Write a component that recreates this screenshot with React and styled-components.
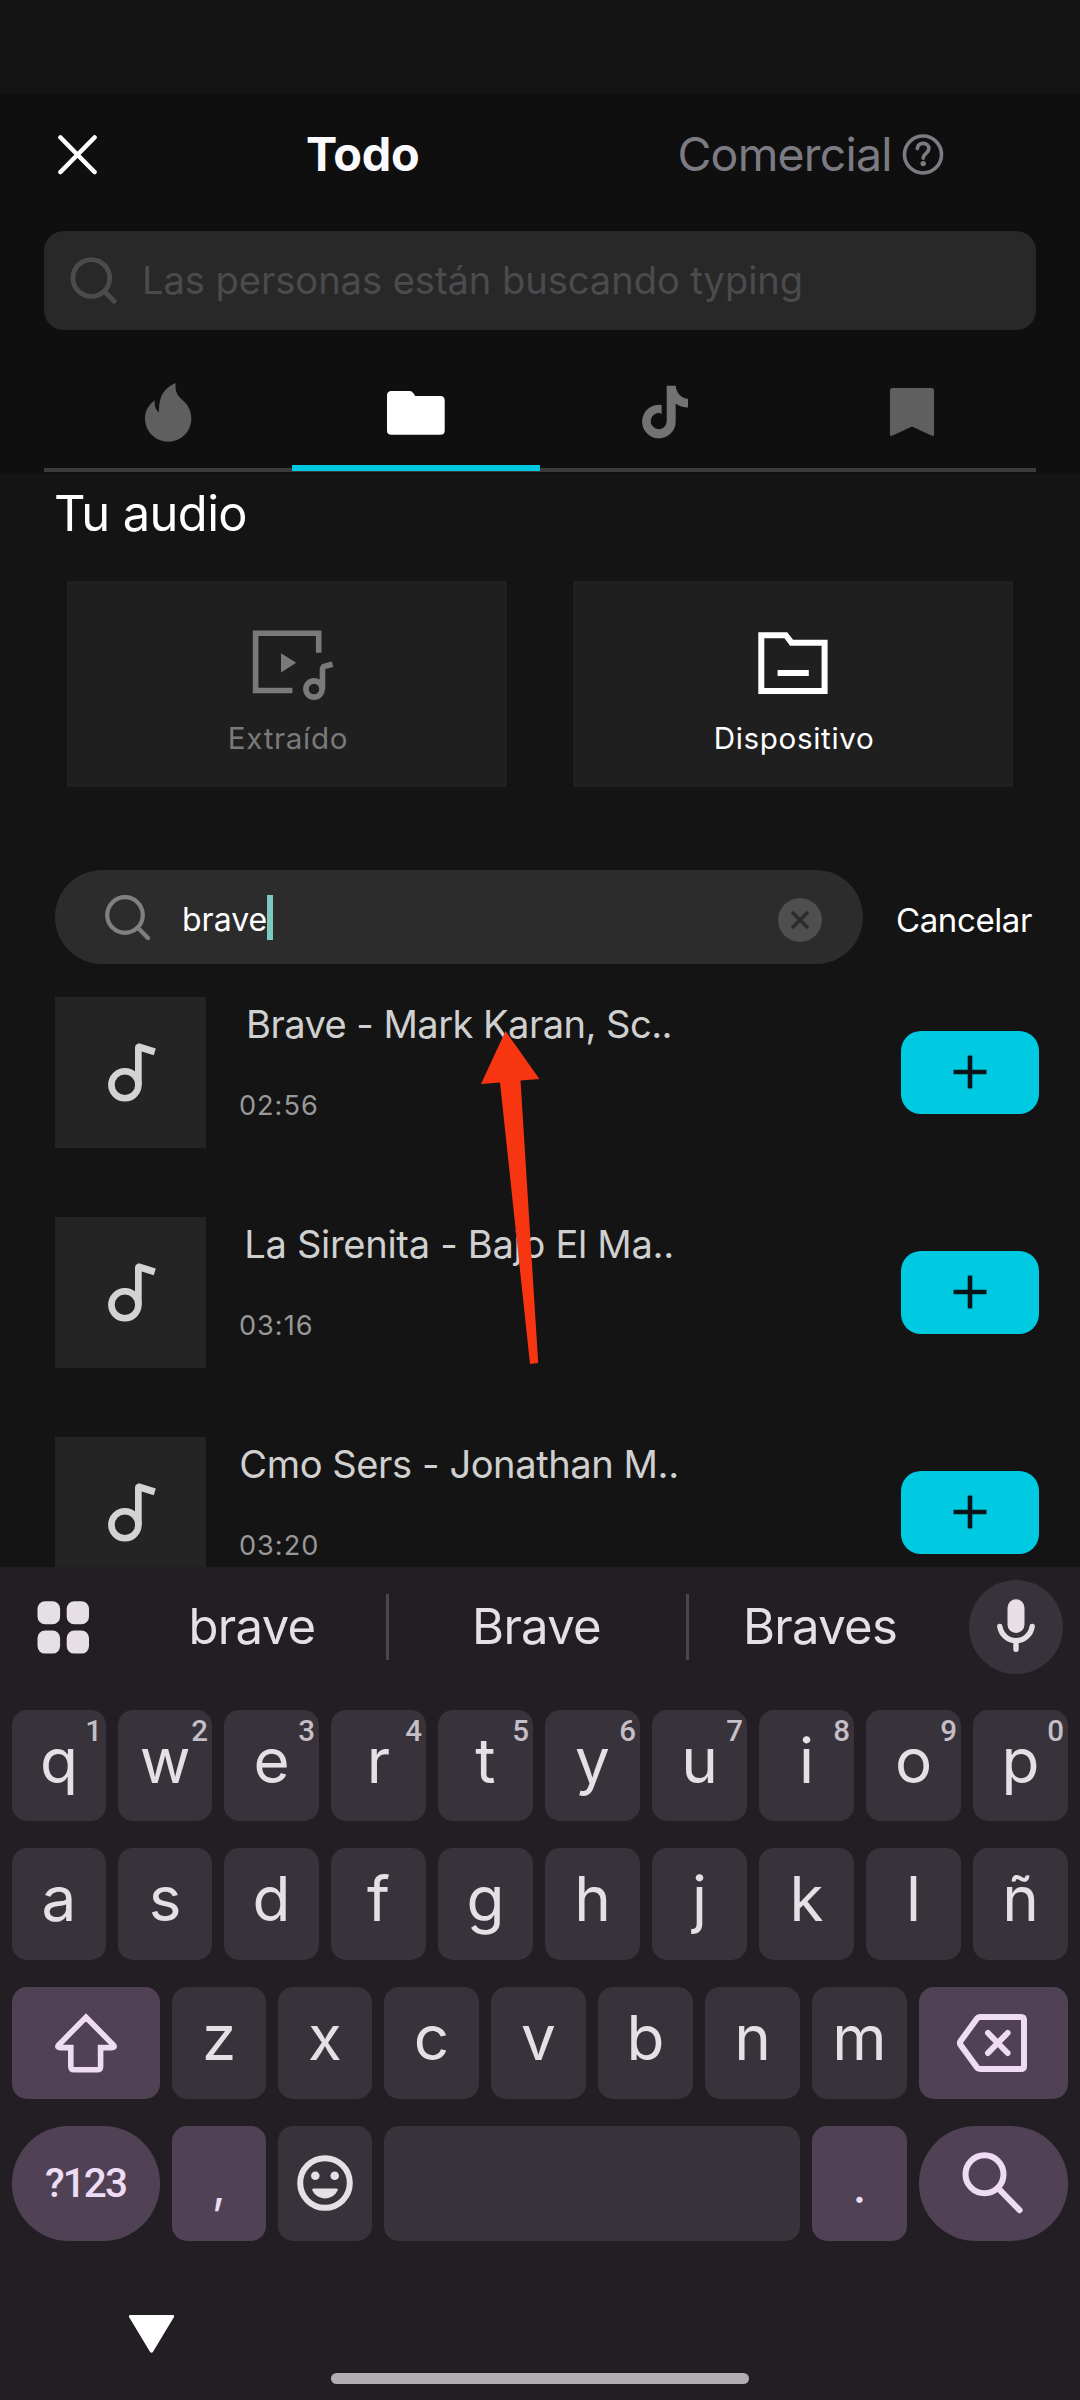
import React from "react";
import styled, { createGlobalStyle } from "styled-components";

const GlobalStyle = createGlobalStyle`
  * { box-sizing: border-box; }
  body { margin: 0; background: #141414; }
`;

const Screen = styled.div`
  display: flex;
  flex-direction: column;
  width: 1080px;
  height: 2400px;
  overflow: hidden;
  background: #141414;
  font-family: Inter, Roboto, sans-serif;
  color: #fff;
`;

const StatusBar = styled.div`
  flex: none;
  height: 94px;
`;

/* ---------- sound library ---------- */

const Library = styled.main`
  flex: none;
  height: 1473px;
  overflow: hidden;
`;

const Header = styled.header`
  height: 379px;
  padding: 0 44px;
  background: #0f0f0f;
`;

const TitleBar = styled.div`
  display: flex;
  align-items: center;
  height: 120px;
  padding-left: 13px;
`;

const TitleTab = styled.div`
  display: flex;
  align-items: center;
  gap: 10px;
  margin-left: ${(p) => p.$offset}px;
  font-size: ${(p) => (p.$active ? 46.8 : 46.4)}px;
  font-weight: ${(p) => (p.$active ? 700 : 400)};
  letter-spacing: ${(p) => (p.$active ? -0.25 : -0.75)}px;
  line-height: 60px;
  color: ${(p) => (p.$active ? "#fafaff" : "#7c7b83")};
`;

const SearchField = styled.div`
  display: flex;
  align-items: center;
  height: 99px;
  margin-top: 17px;
  padding: 0 0 1px 26px;
  border-radius: 20px;
  background: #282828;
`;

const Placeholder = styled.span`
  margin-left: 24px;
  font-size: 38.1px;
  letter-spacing: -0.04px;
  line-height: 50px;
  color: #4b4b4e;
`;

const Tabs = styled.nav`
  display: grid;
  grid-template-columns: repeat(4, 1fr);
  height: 142px;
  border-bottom: 4px solid #3b3b3b;
`;

const Tab = styled.div`
  display: flex;
  align-items: center;
  justify-content: center;
  height: 141px;
  padding-top: 29px;
  border-bottom: 6px solid ${(p) => (p.$active ? "#00c8de" : "transparent")};
  svg { flex: none; }
`;

const SectionTitle = styled.h1`
  margin: 0;
  height: 108px;
  padding: 11px 0 0 54px;
  font-size: 48.8px;
  font-weight: 400;
  letter-spacing: -0.58px;
  line-height: 60px;
`;

const Sources = styled.div`
  display: flex;
  gap: 66px;
  padding-left: 67px;
`;

const SourceCard = styled.div`
  display: flex;
  flex-direction: column;
  align-items: center;
  width: 440px;
  height: 206px;
  padding-top: 47px;
  background: #1f1f1f;
  color: ${(p) => (p.$muted ? "#7a7a7a" : "#fff")};
`;

const SourceLabel = styled.div`
  margin-top: 18px;
  padding-left: 2px;
  font-size: 29.6px;
  letter-spacing: 0.66px;
  line-height: 37px;
`;

const QueryRow = styled.div`
  display: flex;
  align-items: center;
  margin: 83px 0 33px 55px;
`;

const QueryField = styled.div`
  display: flex;
  align-items: center;
  width: 808px;
  height: 94px;
  padding: 0 41px 0 49px;
  border-radius: 47px;
  background: #2c2c2c;
`;

const Query = styled.span`
  margin: 5px 0 0 30px;
  font-size: 32px;
  line-height: 44px;
`;

const Caret = styled.span`
  width: 6px;
  height: 45px;
  margin-right: auto;
  background: #7cc9c1;
`;

const ClearButton = styled.span`
  display: grid;
  place-items: center;
  width: 44px;
  height: 44px;
  margin-top: 6px;
  border-radius: 50%;
  background: #4f4f4f;
`;

const Cancel = styled.span`
  margin: 6px 0 0 33px;
  font-size: 33px;
  letter-spacing: -0.4px;
  line-height: 44px;
`;

const TrackList = styled.div`
  position: relative;
  display: flex;
  flex-direction: column;
  gap: 69px;
`;

const Track = styled.div`
  display: flex;
  align-items: center;
  height: 151px;
  padding-left: 55px;
`;

const Cover = styled.div`
  display: grid;
  place-items: center;
  width: 151px;
  height: 151px;
  padding-right: 2px;
  background: #242424;
`;

const TrackInfo = styled.div`
  align-self: stretch;
  width: 441px;
  margin: 0 221px 0 33px;
`;

const TrackTitle = styled.div`
  padding: 3px 1px 0 0;
  text-align: center;
  white-space: nowrap;
  font-size: 38.1px;
  letter-spacing: ${(p) => p.$tracking}px;
  line-height: 49px;
  color: #d0d0d0;
`;

const TrackTime = styled.div`
  margin-top: 38px;
  font-size: 27.1px;
  letter-spacing: 1px;
  line-height: 37px;
  color: #989898;
`;

const AddButton = styled.div`
  display: grid;
  place-items: center;
  width: 138px;
  height: 83px;
  padding: 0 1px 1px 0;
  border-radius: 20px;
  background: #00cae2;
`;

const PointerArrow = styled.svg`
  position: absolute;
  left: 480px;
  top: 34px;
`;

/* ---------- keyboard ---------- */

const Keyboard = styled.section`
  flex: 1;
  background: #231e24;
  color: #e7dfe6;
`;

const Suggestions = styled.div`
  display: flex;
  align-items: center;
  height: 120px;
  margin-bottom: 23px;
  padding-left: 37px;
`;

const Word = styled.div`
  width: ${(p) => p.$width}px;
  margin-left: ${(p) => p.$gap || 0}px;
  padding-right: 2px;
  text-align: center;
  font-size: 49px;
  letter-spacing: -0.7px;
  line-height: 60px;
`;

const Divider = styled.i`
  width: 3px;
  height: 66px;
  background: #4a464c;
`;

const MicButton = styled.div`
  display: grid;
  place-items: center;
  width: 94px;
  height: 94px;
  margin-left: 16px;
  border-radius: 50%;
  background: #38333a;
`;

const KeyRows = styled.div`
  display: flex;
  flex-direction: column;
  gap: 27px;
  padding: 0 12px;
`;

const KeyRow = styled.div`
  display: grid;
  grid-template-columns: ${(p) => p.$columns || "94px 94px repeat(8, 95px)"};
  grid-template-rows: 100%;
  gap: 12px;
  height: ${(p) => p.$height}px;
`;

const Key = styled.div`
  position: relative;
  min-width: 0;
  border-radius: 15px;
  background: #38333a;
  text-align: center;
  font-size: 62px;
  line-height: 101px;
`;

const Hint = styled.span`
  position: absolute;
  top: 3px;
  right: 4px;
  font: 500 29.5px/36px Roboto, sans-serif;
  color: #c6bec6;
`;

const IconKey = styled(Key)`
  display: grid;
  place-items: center;
  padding-bottom: 1px;
`;

const FunctionKey = styled(IconKey)`
  padding-right: 1px;
  border-radius: ${(p) => (p.$round ? 57 : 15)}px;
  background: #504254;
  color: #eedcf4;
  font: 500 40.5px/50px Roboto, sans-serif;
  letter-spacing: -1.9px;
`;

const PunctuationKey = styled(Key)`
  background: #504254;
  color: #eedcf4;
  font-size: 48px;
  line-height: 120px;
`;

const NavBar = styled.footer`
  display: flex;
  flex-direction: column;
  padding-top: 74px;
`;

const HideKeyboard = styled.svg`
  margin-left: 128px;
`;

const HomeBar = styled.div`
  width: 418px;
  height: 11px;
  margin: 20px 0 0 331px;
  border-radius: 6px;
  background: #b1aeb1;
`;

/* ---------- icons ---------- */

const CloseIcon = () => (
  <svg width="41" height="41" fill="none" stroke="#fff" strokeWidth="4.6" strokeLinecap="round">
    <path d="M3.5 3.5 37.5 38M37.5 3.5 3.5 38" />
  </svg>
);

const HelpIcon = () => (
  <svg width="42" height="42" fill="none" stroke="currentColor" strokeLinecap="round">
    <circle cx="21" cy="21.5" r="18.5" strokeWidth="3.6" />
    <path d="M15.3 15.4C15.8 12 18 10.4 21.2 10.4 24.6 10.4 26.9 12.4 26.9 15.6 26.9 20.4 21.2 20.2 21.2 25.2" strokeWidth="3.6" />
    <circle cx="21.2" cy="30.6" r="2.7" fill="currentColor" stroke="none" />
  </svg>
);

const SearchIcon = () => (
  <svg width="48" height="48" fill="none" stroke="#4b4b4e" strokeWidth="4.8">
    <circle cx="21.3" cy="22" r="18.4" />
    <path d="M34.5 35.5 45.6 46.6" />
  </svg>
);

const FlameIcon = () => (
  <svg width="48" height="60" viewBox="194 66 144 180" fill="#5f5f5f">
    <path d="M289 69C287 90 291 103 306 117C325 132 336 152 336 176A69.5 69.5 0 0 1 197 176C197 153 208 134 227 121C224 136 228 149 239 157C239 118 246 88 289 69Z" />
  </svg>
);

const FolderIcon = () => (
  <svg width="58" height="46" viewBox="0 -2 58 46" fill="#fff">
    <path d="M4.5 0H22.5Q25 0 26.4 2.2L28.2 5H53.5Q57.7 5 57.7 9.5V39.5Q57.7 43.8 53.5 43.8H4.5Q0 43.8 0 39.5V4.5Q0 0 4.5 0Z" />
  </svg>
);

const TikTokIcon = () => (
  <svg width="50" height="56" viewBox="-1 0 50 56" fill="#737373">
    <path d="M26.7 1.7H35.7C36.2 8.5 41 14.2 48 14.8V23.5C43.3 23.5 39 22 35.7 19.4V37.3A16.8 16.8 0 1 1 21.6 21V29.7A8 8 0 1 0 26.7 37.3Z" />
  </svg>
);

const BookmarkIcon = () => (
  <svg width="44" height="49" fill="#5f5f5f">
    <path d="M2.5 0H41.5Q44 0 44 2.5V46.3Q44 49 41.3 47.6L22 38.6 2.7 47.6Q0 49 0 46.3V2.5Q0 0 2.5 0Z" />
  </svg>
);

const ExtractIcon = () => (
  <svg width="94" height="74" fill="none" stroke="currentColor" strokeWidth="5.6">
    <path d="M52.4 62.5H15.6V5.2H78.7V24.7" />
    <path d="M41 25.3 56.2 34.8 41 44.4Z" fill="currentColor" stroke="none" />
    <circle cx="74" cy="61" r="8.1" />
    <path d="M82.5 61V41.5Q82.5 38.6 85.5 38L92.6 36.2" />
  </svg>
);

const DeviceIcon = () => (
  <svg width="94" height="74" fill="none" stroke="currentColor" strokeWidth="6">
    <path d="M15.3 7.2H39.8L45.6 14.8H78.6V63H15.3ZM31.6 45H62.8" />
  </svg>
);

const QuerySearchIcon = () => (
  <svg width="48" height="48" fill="none" stroke="#808080" strokeWidth="4.2">
    <circle cx="21" cy="22" r="17.8" />
    <path d="M33.8 34.8 44 45" strokeLinecap="round" />
  </svg>
);

const ClearIcon = () => (
  <svg width="20" height="20" stroke="#2c2c2c" strokeWidth="3.6">
    <path d="M2 2 18 18M18 2 2 18" />
  </svg>
);

const NoteIcon = () => (
  <svg width="54" height="60">
    <circle cx="21.9" cy="41.8" r="13.5" fill="none" stroke="#d3d3d3" strokeWidth="6.6" />
    <path d="M32 42V4.5Q32 2 34.2 1.1L36 .2 52.8 5.5 50.8 12.2 38.7 8.6V42Z" fill="#d3d3d3" />
  </svg>
);

const PlusIcon = () => (
  <svg width="34" height="34" stroke="#081418" strokeWidth="4.6">
    <path d="M.5 17H33.5M17 .5V33.5" />
  </svg>
);

const GridIcon = () => (
  <svg width="52" height="53" fill="currentColor">
    <rect x=".5" y=".3" width="22.6" height="23" rx="7.5" />
    <rect x="29.7" y=".3" width="22.3" height="23" rx="7.5" />
    <rect x=".5" y="29.6" width="22.6" height="23" rx="7.5" />
    <rect x="29.7" y="29.6" width="22.3" height="23" rx="7.5" />
  </svg>
);

const MicIcon = () => (
  <svg width="64" height="64" fill="none" stroke="currentColor" strokeWidth="5.4" strokeLinecap="round">
    <rect x="23.5" y="4.3" width="17" height="33.6" rx="8.5" fill="currentColor" stroke="none" />
    <path d="M15.8 31.5C17.3 40 24 45.7 32 45.7S46.7 40 48.2 31.5M32 45.7V54.2" />
  </svg>
);

const ShiftIcon = () => (
  <svg width="68" height="66" fill="none" stroke="currentColor" strokeWidth="5.6">
    <path d="M34 7.2 6.6 35Q4.6 37.6 8 37.6H18.8V56.5Q18.8 59.8 22 59.8H45.4Q48.6 59.8 48.6 56.5V37.6H60Q63.4 37.6 61.4 35Z" />
  </svg>
);

const BackspaceIcon = () => (
  <svg width="74" height="64" fill="none" stroke="currentColor" strokeWidth="6">
    <path d="M24 6H65Q68 6 68 9V55Q68 58 65 58H24Q22 58 21 56.5L4.3 33.5Q3.4 32 4.3 30.5L21 7.5Q22 6 24 6Z" />
    <path d="M32 22 51.6 42M51.6 22 32 42" strokeLinecap="round" />
  </svg>
);

const EmojiIcon = () => (
  <svg width="58" height="58" fill="currentColor">
    <circle cx="29" cy="29" r="24.8" fill="none" stroke="currentColor" strokeWidth="6" />
    <circle cx="19.3" cy="21.8" r="4.3" />
    <circle cx="38.7" cy="21.8" r="4.3" />
    <path d="M17.5 34.6H40.5Q42.3 34.6 41.6 36.3C39.4 41.3 34.6 44.4 29 44.4S18.6 41.3 16.4 36.3Q15.7 34.6 17.5 34.6Z" />
  </svg>
);

const EnterSearchIcon = () => (
  <svg width="64" height="64" fill="none" stroke="currentColor" strokeWidth="6" strokeLinecap="round">
    <circle cx="23.5" cy="23.2" r="19" />
    <path d="M37.5 37.6 58.6 59.2" />
  </svg>
);

/* ---------- data ---------- */

const TRACKS = [
  { title: "Brave - Mark Karan, Sc..", time: "02:56", tracking: -0.55 },
  { title: "La Sirenita - Bajo El Ma..", time: "03:16", tracking: -0.3 },
  { title: "Cmo Sers - Jonathan M..", time: "03:20", tracking: -0.42 },
];

const TOP_ROW = [..."qwertyuiop"];
const HINTS = [..."1234567890"];
const HOME_ROW = [..."asdfghjklñ"];
const LOWER_ROW = [..."zxcvbnm"];

export default function App() {
  return (
    <Screen>
      <GlobalStyle />
      <StatusBar />
      <Library>
        <Header>
          <TitleBar>
            <CloseIcon />
            <TitleTab $active $offset={208}>Todo</TitleTab>
            <TitleTab $offset={258}>
              Comercial
              <HelpIcon />
            </TitleTab>
          </TitleBar>
          <SearchField>
            <SearchIcon />
            <Placeholder>Las personas están buscando typing</Placeholder>
          </SearchField>
          <Tabs>
            <Tab><FlameIcon /></Tab>
            <Tab $active><FolderIcon /></Tab>
            <Tab><TikTokIcon /></Tab>
            <Tab><BookmarkIcon /></Tab>
          </Tabs>
        </Header>

        <SectionTitle>Tu audio</SectionTitle>
        <Sources>
          <SourceCard $muted>
            <ExtractIcon />
            <SourceLabel>Extraído</SourceLabel>
          </SourceCard>
          <SourceCard>
            <DeviceIcon />
            <SourceLabel>Dispositivo</SourceLabel>
          </SourceCard>
        </Sources>

        <QueryRow>
          <QueryField>
            <QuerySearchIcon />
            <Query>brave</Query>
            <Caret />
            <ClearButton><ClearIcon /></ClearButton>
          </QueryField>
          <Cancel>Cancelar</Cancel>
        </QueryRow>

        <TrackList>
          {TRACKS.map((track) => (
            <Track key={track.title}>
              <Cover><NoteIcon /></Cover>
              <TrackInfo>
                <TrackTitle $tracking={track.tracking}>{track.title}</TrackTitle>
                <TrackTime>{track.time}</TrackTime>
              </TrackInfo>
              <AddButton><PlusIcon /></AddButton>
            </Track>
          ))}
          <PointerArrow width="60" height="334">
            <path d="M25.6 0 59.4 48 40.5 49.6 58.2 332 50 333 20 51.4 1 53Z" fill="#f73611" />
          </PointerArrow>
        </TrackList>
      </Library>

      <Keyboard>
        <Suggestions>
          <GridIcon />
          <Word $width={266} $gap={31}>brave</Word>
          <Divider />
          <Word $width={297}>Brave</Word>
          <Divider />
          <Word $width={264}>Braves</Word>
          <MicButton><MicIcon /></MicButton>
        </Suggestions>
        <KeyRows>
          <KeyRow $height={111}>
            {TOP_ROW.map((letter, i) => (
              <Key key={letter}>
                {letter}
                <Hint>{HINTS[i]}</Hint>
              </Key>
            ))}
          </KeyRow>
          <KeyRow $height={112}>
            {HOME_ROW.map((letter) => <Key key={letter}>{letter}</Key>)}
          </KeyRow>
          <KeyRow $height={112} $columns="148px 94px 94px repeat(5, 95px) 149px">
            <FunctionKey><ShiftIcon /></FunctionKey>
            {LOWER_ROW.map((letter) => <Key key={letter}>{letter}</Key>)}
            <FunctionKey><BackspaceIcon /></FunctionKey>
          </KeyRow>
          <KeyRow $height={115} $columns="148px 94px 94px 416px 95px 149px">
            <FunctionKey $round>?123</FunctionKey>
            <PunctuationKey>,</PunctuationKey>
            <IconKey><EmojiIcon /></IconKey>
            <Key />
            <PunctuationKey>.</PunctuationKey>
            <FunctionKey $round><EnterSearchIcon /></FunctionKey>
          </KeyRow>
        </KeyRows>
        <NavBar>
          <HideKeyboard width="47" height="38" fill="#fff">
            <path d="M2.5 0H44.5Q47 0 45.8 2.2L25.2 36.6Q23.5 39 21.8 36.6L1.2 2.2Q0 0 2.5 0Z" />
          </HideKeyboard>
          <HomeBar />
        </NavBar>
      </Keyboard>
    </Screen>
  );
}
